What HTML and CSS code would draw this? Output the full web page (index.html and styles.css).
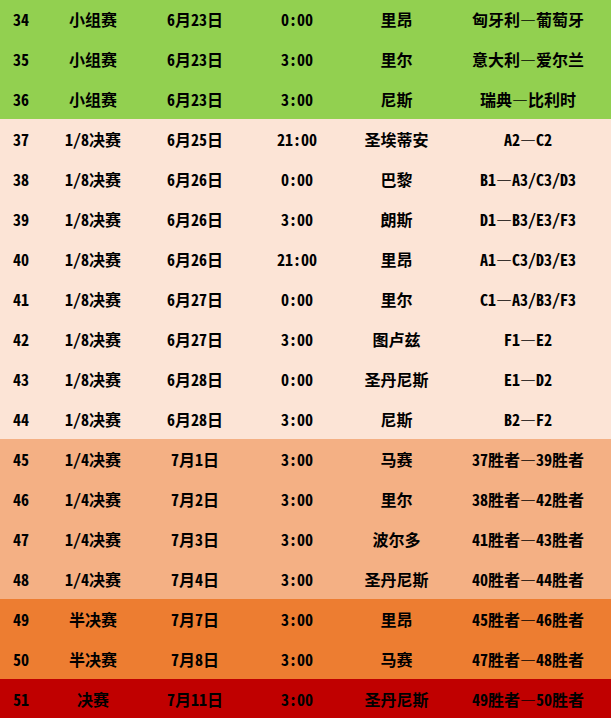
FILE: index.html
```html
<!DOCTYPE html>
<html lang="zh-CN">
<head>
<meta charset="utf-8">
<link rel="stylesheet" href="styles.css">
</head>
<body>
<table class="sched">
<colgroup><col class="c1"><col class="c2"><col class="c3"><col class="c4"><col class="c5"><col class="c6"></colgroup>
<tbody>
<tr class="g"><td>34</td><td>小组赛</td><td>6月23日</td><td>0:00</td><td>里昂</td><td>匈牙利—葡萄牙</td></tr>
<tr class="g"><td>35</td><td>小组赛</td><td>6月23日</td><td>3:00</td><td>里尔</td><td>意大利—爱尔兰</td></tr>
<tr class="g"><td>36</td><td>小组赛</td><td>6月23日</td><td>3:00</td><td>尼斯</td><td>瑞典—比利时</td></tr>
<tr class="p"><td>37</td><td>1/8决赛</td><td>6月25日</td><td>21:00</td><td>圣埃蒂安</td><td>A2—C2</td></tr>
<tr class="p"><td>38</td><td>1/8决赛</td><td>6月26日</td><td>0:00</td><td>巴黎</td><td>B1—A3/C3/D3</td></tr>
<tr class="p"><td>39</td><td>1/8决赛</td><td>6月26日</td><td>3:00</td><td>朗斯</td><td>D1—B3/E3/F3</td></tr>
<tr class="p"><td>40</td><td>1/8决赛</td><td>6月26日</td><td>21:00</td><td>里昂</td><td>A1—C3/D3/E3</td></tr>
<tr class="p"><td>41</td><td>1/8决赛</td><td>6月27日</td><td>0:00</td><td>里尔</td><td>C1—A3/B3/F3</td></tr>
<tr class="p"><td>42</td><td>1/8决赛</td><td>6月27日</td><td>3:00</td><td>图卢兹</td><td>F1—E2</td></tr>
<tr class="p"><td>43</td><td>1/8决赛</td><td>6月28日</td><td>0:00</td><td>圣丹尼斯</td><td>E1—D2</td></tr>
<tr class="p"><td>44</td><td>1/8决赛</td><td>6月28日</td><td>3:00</td><td>尼斯</td><td>B2—F2</td></tr>
<tr class="q"><td>45</td><td>1/4决赛</td><td>7月1日</td><td>3:00</td><td>马赛</td><td>37胜者—39胜者</td></tr>
<tr class="q"><td>46</td><td>1/4决赛</td><td>7月2日</td><td>3:00</td><td>里尔</td><td>38胜者—42胜者</td></tr>
<tr class="q"><td>47</td><td>1/4决赛</td><td>7月3日</td><td>3:00</td><td>波尔多</td><td>41胜者—43胜者</td></tr>
<tr class="q"><td>48</td><td>1/4决赛</td><td>7月4日</td><td>3:00</td><td>圣丹尼斯</td><td>40胜者—44胜者</td></tr>
<tr class="s"><td>49</td><td>半决赛</td><td>7月7日</td><td>3:00</td><td>里昂</td><td>45胜者—46胜者</td></tr>
<tr class="s"><td>50</td><td>半决赛</td><td>7月8日</td><td>3:00</td><td>马赛</td><td>47胜者—48胜者</td></tr>
<tr class="f"><td>51</td><td>决赛</td><td>7月11日</td><td>3:00</td><td>圣丹尼斯</td><td>49胜者—50胜者</td></tr>
</tbody>
</table>
</body>
</html>
```
FILE: styles.css
```css
html, body {
  margin: 0;
  padding: 0;
  background: #ffffff;
}
.sched {
  border-collapse: collapse;
  table-layout: fixed;
  width: 611px;
  margin-top: -1px;
  font-family: "Noto Sans Mono CJK SC", "Noto Sans CJK SC", sans-serif;
  font-feature-settings: "hwid";
  font-weight: 700;
  font-size: 16px;
  color: #000;
}
.c1 { width: 42px; }
.c2 { width: 102px; }
.c3 { width: 102px; }
.c4 { width: 102px; }
.c5 { width: 97px; }
.c6 { width: 166px; }
.sched td {
  height: 40px;
  padding: 0;
  text-align: center;
  vertical-align: middle;
  white-space: nowrap;
  line-height: 20px;
}
.g { background: #92d050; }
.p { background: #fce4d6; }
.q { background: #f4b084; }
.s { background: #ed7d31; }
.f { background: #c00000; }
```
